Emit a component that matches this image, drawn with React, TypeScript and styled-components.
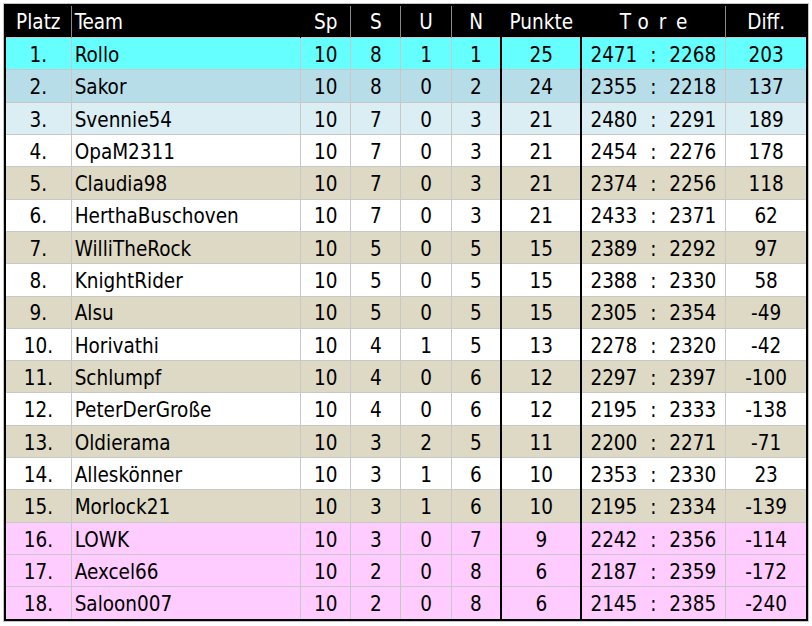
import styled, { createGlobalStyle } from "styled-components";

const GlobalStyle = createGlobalStyle`
  body {
    margin: 0;
    background: #fff;
    font-family: "DejaVu Sans Condensed", "DejaVu Sans", sans-serif;
    font-stretch: condensed;
  }
`;

type Tone = "cyan" | "blue" | "light" | "white" | "beige" | "pink";

type Entry = {
  team: string;
  sp: number;
  s: number;
  u: number;
  n: number;
  punkte: number;
  plus: number;
  minus: number;
  tone: Tone;
};

const toneColors: Record<Tone, string> = {
  cyan: "#66ffff",
  blue: "#b7dde8",
  light: "#daeef3",
  white: "#ffffff",
  beige: "#ddd9c4",
  pink: "#ffccff",
};

const entries: Entry[] = [
  { team: "Rollo", sp: 10, s: 8, u: 1, n: 1, punkte: 25, plus: 2471, minus: 2268, tone: "cyan" },
  { team: "Sakor", sp: 10, s: 8, u: 0, n: 2, punkte: 24, plus: 2355, minus: 2218, tone: "blue" },
  { team: "Svennie54", sp: 10, s: 7, u: 0, n: 3, punkte: 21, plus: 2480, minus: 2291, tone: "light" },
  { team: "OpaM2311", sp: 10, s: 7, u: 0, n: 3, punkte: 21, plus: 2454, minus: 2276, tone: "white" },
  { team: "Claudia98", sp: 10, s: 7, u: 0, n: 3, punkte: 21, plus: 2374, minus: 2256, tone: "beige" },
  { team: "HerthaBuschoven", sp: 10, s: 7, u: 0, n: 3, punkte: 21, plus: 2433, minus: 2371, tone: "white" },
  { team: "WilliTheRock", sp: 10, s: 5, u: 0, n: 5, punkte: 15, plus: 2389, minus: 2292, tone: "beige" },
  { team: "KnightRider", sp: 10, s: 5, u: 0, n: 5, punkte: 15, plus: 2388, minus: 2330, tone: "white" },
  { team: "Alsu", sp: 10, s: 5, u: 0, n: 5, punkte: 15, plus: 2305, minus: 2354, tone: "beige" },
  { team: "Horivathi", sp: 10, s: 4, u: 1, n: 5, punkte: 13, plus: 2278, minus: 2320, tone: "white" },
  { team: "Schlumpf", sp: 10, s: 4, u: 0, n: 6, punkte: 12, plus: 2297, minus: 2397, tone: "beige" },
  { team: "PeterDerGroße", sp: 10, s: 4, u: 0, n: 6, punkte: 12, plus: 2195, minus: 2333, tone: "white" },
  { team: "Oldierama", sp: 10, s: 3, u: 2, n: 5, punkte: 11, plus: 2200, minus: 2271, tone: "beige" },
  { team: "Alleskönner", sp: 10, s: 3, u: 1, n: 6, punkte: 10, plus: 2353, minus: 2330, tone: "white" },
  { team: "Morlock21", sp: 10, s: 3, u: 1, n: 6, punkte: 10, plus: 2195, minus: 2334, tone: "beige" },
  { team: "LOWK", sp: 10, s: 3, u: 0, n: 7, punkte: 9, plus: 2242, minus: 2356, tone: "pink" },
  { team: "Aexcel66", sp: 10, s: 2, u: 0, n: 8, punkte: 6, plus: 2187, minus: 2359, tone: "pink" },
  { team: "Saloon007", sp: 10, s: 2, u: 0, n: 8, punkte: 6, plus: 2145, minus: 2385, tone: "pink" },
];

const Frame = styled.div`
  margin: 3px 0 0 3px;
  width: 804px;
  border: 1px solid #c4c4c4;
`;

const Table = styled.table`
  width: 804px;
  height: 617px;
  border-collapse: collapse;
  table-layout: fixed;
  border: 2px solid #000;
  font-size: 20.5px;
  color: #000;
`;

const HeadCell = styled.th<{ $align?: "left" | "center"; $sep?: boolean; $spaced?: boolean }>`
  background: #000;
  color: #fff;
  font-weight: normal;
  height: 31px;
  padding: ${(p) => (p.$align === "left" ? "0 0 0 3px" : p.$spaced ? "0 0 0 10px" : "0")};
  text-align: ${(p) => p.$align ?? "center"};
  letter-spacing: ${(p) => (p.$spaced ? "10px" : "0")};
  border-left: 1px solid ${(p) => (p.$sep ? "#8a8a8a" : "#000")};
  white-space: nowrap;
`;

const Row = styled.tr<{ $tone: Tone }>`
  background: ${(p) => toneColors[p.$tone]};
`;

const Cell = styled.td<{ $align?: "left" | "center"; $thick?: boolean }>`
  padding: ${(p) => (p.$align === "left" ? "3px 0 0 3px" : "3px 0 0")};
  text-align: ${(p) => p.$align ?? "center"};
  border: 1px solid #c8c8c8;
  border-left: ${(p) => (p.$thick ? "2px solid #000" : "1px solid #c8c8c8")};
  white-space: nowrap;
  line-height: 1;
`;

const Goals = styled.div`
  display: grid;
  grid-template-columns: 1fr auto 1fr;
  padding: 0 9px 0 8px;
`;

const GoalLeft = styled.span`
  text-align: left;
`;

const GoalRight = styled.span`
  text-align: right;
`;

const Colon = styled.span`
  padding: 0 4px;
`;

const App = () => {
  return (
    <>
      <GlobalStyle />
      <Frame>
        <Table>
          <colgroup>
            <col style={{ width: 66 }} />
            <col style={{ width: 229 }} />
            <col style={{ width: 50 }} />
            <col style={{ width: 50 }} />
            <col style={{ width: 50 }} />
            <col style={{ width: 50 }} />
            <col style={{ width: 80 }} />
            <col style={{ width: 144 }} />
            <col style={{ width: 81 }} />
          </colgroup>
          <thead>
            <tr>
              <HeadCell>Platz</HeadCell>
              <HeadCell $align="left" $sep>
                Team
              </HeadCell>
              <HeadCell>Sp</HeadCell>
              <HeadCell $sep>S</HeadCell>
              <HeadCell $sep>U</HeadCell>
              <HeadCell $sep>N</HeadCell>
              <HeadCell>Punkte</HeadCell>
              <HeadCell $spaced>Tore</HeadCell>
              <HeadCell $sep>Diff.</HeadCell>
            </tr>
          </thead>
          <tbody>
            {entries.map((entry, index) => (
              <Row key={entry.team} $tone={entry.tone}>
                <Cell>{index + 1}.</Cell>
                <Cell $align="left">{entry.team}</Cell>
                <Cell>{entry.sp}</Cell>
                <Cell>{entry.s}</Cell>
                <Cell>{entry.u}</Cell>
                <Cell>{entry.n}</Cell>
                <Cell $thick>{entry.punkte}</Cell>
                <Cell $thick>
                  <Goals>
                    <GoalLeft>{entry.plus}</GoalLeft>
                    <Colon>:</Colon>
                    <GoalRight>{entry.minus}</GoalRight>
                  </Goals>
                </Cell>
                <Cell>{entry.plus - entry.minus}</Cell>
              </Row>
            ))}
          </tbody>
        </Table>
      </Frame>
    </>
  );
};

export default App;
